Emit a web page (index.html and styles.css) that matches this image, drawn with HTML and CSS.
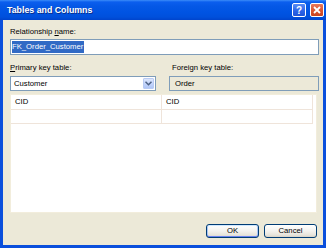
FILE: index.html
```html
<!DOCTYPE html>
<html>
<head>
<meta charset="utf-8">
<link rel="stylesheet" href="styles.css">
</head>
<body>
<div class="window">
  <div class="titlebar">
    <span class="title">Tables and Columns</span>
    <div class="tb-buttons">
      <span class="tb-btn help">?</span>
      <span class="tb-btn close"><svg width="8" height="8" viewBox="0 0 8 8"><path d="M1 1 L7 7 M7 1 L1 7" stroke="#fff" stroke-width="1.8" fill="none"/></svg></span>
    </div>
  </div>
  <div class="client">
    <div class="label">Relationship <u>n</u>ame:</div>
    <div class="textbox"><span class="sel">FK_Order_Customer</span></div>
    <div class="keys">
      <div class="col pk">
        <div class="label"><u>P</u>rimary key table:</div>
        <div class="combo">
          <span class="combo-text">Customer</span>
          <span class="drop"><svg width="7" height="5" viewBox="0 0 7 5"><path d="M0.5 0.8 L3.5 3.8 L6.5 0.8" stroke="#4D6185" stroke-width="1.5" fill="none"/></svg></span>
        </div>
      </div>
      <div class="col fk">
        <div class="label fk-label">Foreign key table:</div>
        <div class="readonly">Order</div>
      </div>
    </div>
    <div class="grid">
      <div class="row"><div class="cell">CID</div><div class="cell">CID</div></div>
      <div class="row"><div class="cell"></div><div class="cell"></div></div>
    </div>
    <div class="actions">
      <button class="btn default">OK</button>
      <button class="btn">Cancel</button>
    </div>
  </div>
</div>
</body>
</html>
```

FILE: styles.css
```css
html, body {
  margin: 0;
  padding: 0;
  background: #ffffff;
}
body {
  font-family: "Liberation Sans", Arial, sans-serif;
  font-size: 7.7px;
  color: #000;
}
.window {
  width: 326px;
  height: 248px;
  display: flex;
  flex-direction: column;
  background: #0A4FDC;
  box-sizing: border-box;
}
.titlebar {
  height: 20px;
  flex: none;
  display: flex;
  align-items: center;
  padding: 0 2px 0 7px;
  background: linear-gradient(to bottom, #3C8CF8 0px, #0B5EEE 2px, #0558E6 6px, #0054E3 12px, #0050DC 17px, #0044CC 20px);
}
.title {
  color: #fff;
  font-weight: bold;
  font-size: 8.8px;
  text-shadow: 1px 1px 0 #0A2E8C;
  flex: 1;
}
.tb-buttons {
  display: flex;
  gap: 4px;
}
.tb-btn {
  width: 14px;
  height: 14px;
  box-sizing: border-box;
  border: 1px solid #fff;
  border-radius: 2px;
  display: flex;
  align-items: center;
  justify-content: center;
  color: #fff;
  font-weight: bold;
  font-size: 10px;
}
.help {
  background: linear-gradient(to bottom, #5A8CF5, #2A63E8 60%, #1F55D8);
}
.close {
  background: linear-gradient(to bottom, #E8795C, #D9522C 60%, #C84420);
}
.client {
  flex: 1;
  margin: 0 3px 3px 3px;
  background: #ECE9D8;
  padding: 7px 4px 7px 7px;
  display: flex;
  flex-direction: column;
}
.label {
  line-height: 10px;
  height: 10px;
  white-space: nowrap;
}
.textbox {
  margin-top: 2px;
  height: 16px;
  box-sizing: border-box;
  border: 1px solid #7F9DB9;
  background: #fff;
  padding: 1px;
  display: flex;
}
.sel {
  background: #316AC5;
  color: #fff;
  line-height: 12px;
  height: 12px;
  padding: 0 1px 0 0;
}
.keys {
  margin-top: 8px;
  display: flex;
  gap: 13px;
}
.pk {
  width: 146px;
}
.fk {
  flex: 1;
}
.fk-label {
  padding-left: 3px;
}
.combo, .readonly {
  margin-top: 3px;
  height: 15px;
  box-sizing: border-box;
  border: 1px solid #7F9DB9;
  display: flex;
  align-items: center;
}
.combo {
  background: #fff;
  padding: 1px;
}
.combo-text {
  flex: 1;
  padding-left: 2px;
}
.drop {
  width: 11px;
  height: 11px;
  box-sizing: border-box;
  border: 1px solid #B9CBF3;
  border-radius: 1px;
  background: linear-gradient(to bottom, #DCE6FC, #C1D3FB 60%, #B0C6F6);
  display: flex;
  align-items: center;
  justify-content: center;
}
.readonly {
  background: #ECE9D8;
  padding-left: 5px;
}
.grid {
  margin-top: 3px;
  margin-right: 2px;
  height: 119px;
  box-sizing: border-box;
  background: #fff;
  border: 1px solid #F2EDDC;
  display: flex;
  flex-direction: column;
}
.row {
  display: flex;
  height: 15px;
  width: 302px;
}
.cell {
  width: 151px;
  box-sizing: border-box;
  border-right: 1px solid #EFE4DA;
  border-bottom: 1px solid #EFE4DA;
  line-height: 14px;
  padding-left: 4px;
}
.row:nth-child(2) {
  height: 14px;
}
.actions {
  margin-top: 11px;
  margin-right: 2px;
  display: flex;
  justify-content: flex-end;
  gap: 5px;
}
.btn {
  width: 53px;
  height: 14px;
  box-sizing: border-box;
  border: 1px solid #003C74;
  border-radius: 3px;
  background: linear-gradient(to bottom, #FFFFFF, #F3F2EE 50%, #E6E3DA 85%, #D6D0C5);
  font-family: "Liberation Sans", Arial, sans-serif;
  font-size: 7.7px;
  color: #000;
  padding: 0;
  line-height: 12px;
}
.btn.default {
  box-shadow: inset 0 1px 0 #CEE7FF, inset 0 -1px 0 #6982EE, inset 1px 0 0 #A8C4F4, inset -1px 0 0 #A8C4F4;
}
```
